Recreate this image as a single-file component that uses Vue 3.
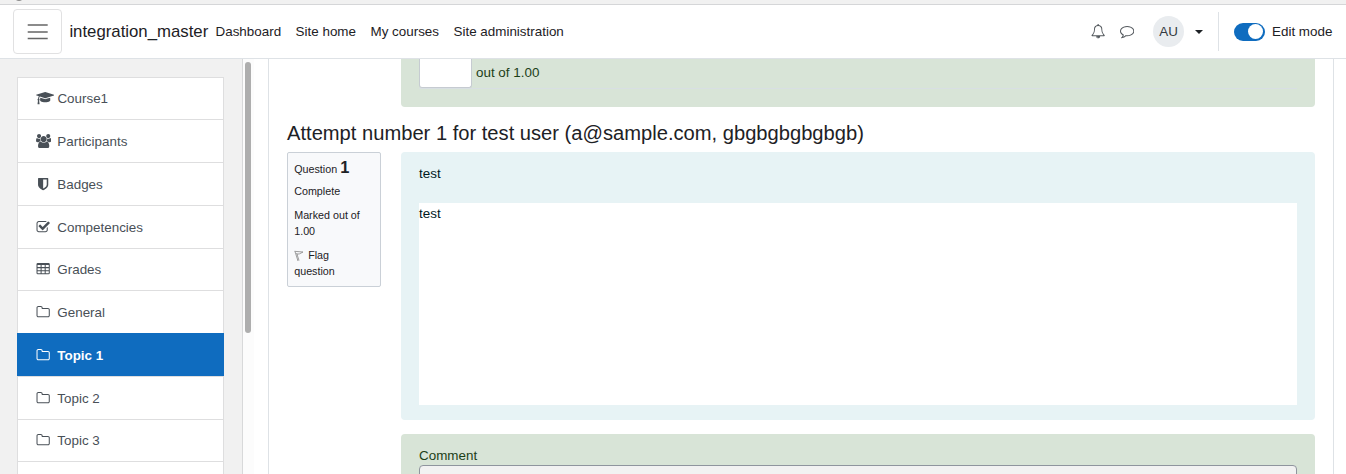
<template>
    <div class="page">
        <div class="browser-strip"><span class="tab-dot"></span></div>
        <header class="navbar">
            <button class="toggler" aria-label="Side panel">
                <svg viewBox="0 0 30 30"><path d="M4.7 8h20M4.7 15h20M4.7 21.5h20" /></svg>
            </button>
            <span class="brand">integration_master</span>
            <nav class="links">
                <a v-for="link in links" :key="link">{{ link }}</a>
            </nav>
            <svg class="fa bell" viewBox="0 0 1792 1792"><path :d="icons.bell" /></svg>
            <svg class="fa comment" viewBox="0 0 1792 1792"><path :d="icons.comment" /></svg>
            <span class="avatar">AU</span>
            <span class="caret"></span>
            <div class="edit">
                <span class="switch" :class="{ on: editMode }" @click="editMode = !editMode"></span>
                <span>Edit mode</span>
            </div>
        </header>
        <div class="body">
            <aside class="drawer">
                <ul class="menu">
                    <li v-for="item in items" :key="item.label" :class="{ active: item.label === current }" @click="current = item.label">
                        <svg class="fa" :class="item.icon" :viewBox="boxes[item.icon] || '0 0 1792 1792'">
                            <path fill-rule="evenodd" :d="icons[item.icon]" />
                        </svg>
                        <span>{{ item.label }}</span>
                    </li>
                    <li></li>
                </ul>
            </aside>
            <div class="scrollbar"><div class="thumb"></div></div>
            <main class="content">
                <section class="green marks">
                    <div class="mark-row">
                        <span class="mark-input"></span>
                        <span>out of 1.00</span>
                    </div>
                </section>
                <h4>Attempt number 1 for test user (a@sample.com, gbgbgbgbgbgb)</h4>
                <div class="question">
                    <div class="info">
                        <div class="number">Question <b>1</b></div>
                        <div class="state">Complete</div>
                        <div class="grade">Marked out of 1.00</div>
                        <div class="flag">
                            <svg viewBox="0 0 10 12">
                                <path d="M1 1.5l3 9.5M2.6 3L5 10.5M.5 1.3l8.5.7-3.4 1.8-2.6.4" />
                            </svg>
                            Flag question
                        </div>
                    </div>
                    <div class="formulation">
                        <p>test</p>
                        <div class="answer">test</div>
                    </div>
                </div>
                <section class="green feedback">
                    <label>Comment</label>
                    <div class="editor"></div>
                </section>
            </main>
        </div>
    </div>
</template>
<script setup>
import { ref } from 'vue'

const editMode = ref(true)
const current = ref('Topic 1')
const links = ['Dashboard', 'Site home', 'My courses', 'Site administration']

const items = [
    { label: 'Course1', icon: 'cap' },
    { label: 'Participants', icon: 'users' },
    { label: 'Badges', icon: 'shield' },
    { label: 'Competencies', icon: 'check' },
    { label: 'Grades', icon: 'table' },
    { label: 'General', icon: 'folder' },
    { label: 'Topic 1', icon: 'folder' },
    { label: 'Topic 2', icon: 'folder' },
    { label: 'Topic 3', icon: 'folder' },
]

// icons wider than the usual square
const boxes = { cap: '0 0 2304 1792', users: '-64 0 1920 1792' }

const icons = {
    cap: 'M1774 836l18 316q4 69-82 128t-235 93.5-323 34.5-323-34.5-235-93.5-82-128l18-316 574 181q22 7 48 7t48-7zm530-324q0 23-22 31l-1120 352q-4 1-10 1t-10-1l-652-206q-43 34-71 111.5t-34 178.5q63 36 63 109 0 69-58 107l58 433q2 14-8 25-9 11-24 11h-192q-15 0-24-11-10-11-8-25l58-433q-58-38-58-107 0-73 65-111 11-207 98-330l-333-104q-22-8-22-31t22-31l1120-352q4-1 10-1t10 1l1120 352q22 8 22 31z',
    users: 'M529 896q-162 5-265 128h-134q-82 0-138-40.5t-56-118.5q0-353 124-353 6 0 43.5 21t97.5 42.5 119 21.5q67 0 133-23-5 37-5 66 0 139 81 256zm1071 637q0 120-73 189.5t-194 69.5h-874q-121 0-194-69.5t-73-189.5q0-53 3.5-103.5t14-109 26.5-108.5 43-97.5 62-81 85.5-53.5 111.5-20q10 0 43 21.5t73 48 107 48 135 21.5 135-21.5 107-48 73-48 43-21.5q61 0 111.5 20t85.5 53.5 62 81 43 97.5 26.5 108.5 14 109 3.5 103.5zm-1024-1277q0 106-75 181t-181 75-181-75-75-181 75-181 181-75 181 75 75 181zm704 384q0 159-112.5 271.5t-271.5 112.5-271.5-112.5-112.5-271.5 112.5-271.5 271.5-112.5 271.5 112.5 112.5 271.5zm576 225q0 78-56 118.5t-138 40.5h-134q-103-123-265-128 81-117 81-256 0-29-5-66 66 23 133 23 59 0 119-21.5t97.5-42.5 43.5-21q124 0 124 353zm-128-609q0 106-75 181t-181 75-181-75-75-181 75-181 181-75 181 75 75 181z',
    shield: 'M1344 960v-640h-448v1137q119-63 213-137 235-184 235-360zm192-768v768q0 86-33.5 170.5t-83 150-118 127.5-126.5 103-121 77.5-89.5 49.5-42.5 20q-12 6-26 6t-26-6q-16-7-42.5-20t-89.5-49.5-121-77.5-126.5-103-118-127.5-83-150-33.5-170.5v-768q0-26 19-45t45-19h1152q26 0 45 19t19 45z',
    check: 'M1472 930v318q0 119-84.5 203.5t-203.5 84.5h-832q-119 0-203.5-84.5t-84.5-203.5v-832q0-119 84.5-203.5t203.5-84.5h832q63 0 117 25 15 7 18 23 3 17-9 29l-49 49q-10 10-23 10-3 0-9-2-23-6-45-6h-832q-66 0-113 47t-47 113v832q0 66 47 113t113 47h832q66 0 113-47t47-113v-254q0-13 9-22l64-64q10-10 23-10 6 0 12 3 20 8 20 29zm231-489l-814 814q-24 24-57 24t-57-24l-430-430q-24-24-24-57t24-57l110-110q24-24 57-24t57 24l263 263 647-647q24-24 57-24t57 24l110 110q24 24 24 57t-24 57z',
    table: 'M224 128h1344q160 0 160 160v1088q0 160-160 160h-1344q-160 0-160-160v-1088q0-160 160-160zM192 384v256h384v-256zM704 384v256h384v-256zM1216 384v256h384v-256zM192 768v256h384v-256zM704 768v256h384v-256zM1216 768v256h384v-256zM192 1152v256h384v-256zM704 1152v256h384v-256zM1216 1152v256h384v-256z',
    folder: 'M1600 1312v-704q0-40-28-68t-68-28h-704q-40 0-68-28t-28-68v-64q0-40-28-68t-68-28h-320q-40 0-68 28t-28 68v960q0 40 28 68t68 28h1216q40 0 68-28t28-68zm128-704v704q0 92-66 158t-158 66h-1216q-92 0-158-66t-66-158v-960q0-92 66-158t158-66h320q92 0 158 66t66 158v32h672q92 0 158 66t66 158z',
    bell: 'M912 1696q0-16-16-16-59 0-101.5-42.5t-42.5-101.5q0-16-16-16t-16 16q0 73 51.5 124.5t124.5 51.5q16 0 16-16zm-666-288h1300q-266-300-266-832 0-51-24-105t-69-103-121.5-80.5-169.5-31.5-169.5 31.5-121.5 80.5-69 103-24 105q0 532-266 832zm1482 0q0 52-38 90t-90 38h-448q0 106-75 181t-181 75-181-75-75-181h-448q-52 0-90-38t-38-90q50-42 91-88t85-119.5 74.5-158.5 50-206 19.5-260q0-152 117-282.5t307-158.5q-8-19-8-39 0-40 28-68t68-28 68 28 28 68q0 20-8 39 190 28 307 158.5t117 282.5q0 139 19.5 260t50 206 74.5 158.5 85 119.5 91 88z',
    comment: 'M896 384q-204 0-381.5 69.5t-282 187.5-104.5 255q0 112 71.5 213.5t201.5 175.5l87 50-27 96q-24 91-70 172 152-63 275-171l43-38 57 6q69 8 130 8 204 0 381.5-69.5t282-187.5 104.5-255-104.5-255-282-187.5-381.5-69.5zm896 512q0 174-120 321.5t-326 233-450 85.5q-70 0-145-8-198 175-460 242-49 14-114 22h-5q-15 0-27-10.5t-16-27.5v-1q-3-4-.5-12t2-10 4.5-9.5l6-9 7-8.5 8-9q7-8 31-34.5t34.5-38 31-39.5 32.5-51 27-59 26-76q-157-89-247.5-220t-90.5-281q0-174 120-321.5t326-233 450-85.5 450 85.5 326 233 120 321.5z',
}
</script>
<style>
body {
    overflow: hidden;
}
</style>
<style scoped>
* {
    box-sizing: border-box;
}

.page {
    display: flex;
    flex-direction: column;
    height: 474px;
    overflow: hidden;
    background: #fff;
    color: #1d2125;
    font-family: "Liberation Sans", Arial, sans-serif;
    font-size: 13.42px;
    line-height: 20px;
}

.browser-strip {
    flex: none;
    height: 5px;
    background: #f1f1f1;
    border-bottom: 1px solid #d5d6d8;
    overflow: hidden;
}

.tab-dot {
    display: block;
    width: 10px;
    height: 10px;
    margin: -9px 0 0 14px;
    border-radius: 50%;
    background: #8c8c8c;
}

.navbar {
    display: flex;
    flex: none;
    align-items: center;
    height: 54px;
    padding: 0 13.6px 0 13px;
    border-bottom: 1px solid #dee2e6;
}

.toggler {
    display: flex;
    align-items: center;
    justify-content: center;
    width: 49px;
    height: 45px;
    padding: 0;
    background: #fff;
    border: 1px solid #e1e1e2;
    border-radius: 4px;
}

.toggler svg {
    width: 30px;
    height: 30px;
    fill: none;
    stroke: #666;
    stroke-width: 1.7;
}

.brand {
    width: 147px;
    padding-left: 7.4px;
    font-size: 16.78px;
    white-space: nowrap;
}

.links {
    display: flex;
    flex: 1;
    gap: 14.5px;
    padding-left: 6.5px;
}

.fa {
    flex: none;
    height: 14.3px;
    fill: currentColor;
}

.bell,
.comment {
    width: 14.3px;
    color: #54595e;
}

.comment {
    margin: 0 19px 0 14px;
}

.avatar {
    width: 31px;
    height: 31px;
    border-radius: 50%;
    background: #e9ecef;
    color: #343a40;
    line-height: 31px;
    text-align: center;
}

.caret {
    margin: 0 15px 0 11px;
    border: 4px solid transparent;
    border-top-color: #1d2125;
    border-bottom: 0;
}

.edit {
    display: flex;
    align-items: center;
    gap: 7px;
    height: 39px;
    padding-left: 15px;
    border-left: 1px solid #dee2e6;
}

.switch {
    display: flex;
    align-items: center;
    width: 31px;
    height: 18px;
    padding: 0 2px;
    border-radius: 9px;
    background: #adb5bd;
}

.switch::before {
    content: "";
    width: 15px;
    height: 15px;
    border-radius: 50%;
    background: #fff;
}

.switch.on {
    justify-content: flex-end;
    background: #0f6cbf;
}

.body {
    display: flex;
    flex: 1;
    min-height: 0;
}

.drawer {
    width: 243px;
    padding: 18px 18px 0 17px;
    background: #f1f1f1;
    border-right: 1px solid #d8d9da;
    overflow: hidden;
}

.menu {
    display: grid;
    grid-template-rows: 42px 43px 43px 43px 42px 43px 43px 43px 42px 43px;
    margin: 0;
    padding: 0;
    list-style: none;
}

.menu li {
    display: flex;
    align-items: center;
    padding-left: 18px;
    background: #fff;
    border: 1px solid #dededf;
    border-bottom: 0;
    color: #495057;
}

.menu li span {
    margin-left: 7px;
    padding-top: 1px;
}

.menu .fa {
    width: 14.3px;
}

.menu .cap {
    width: 18.4px;
}

.menu .users {
    width: 15.3px;
}

.menu .cap + span {
    margin-left: 3px;
}

.menu .users + span {
    margin-left: 6px;
}

.menu li.active {
    background: #0f6cbf;
    border-color: #0f6cbf;
    color: #fff;
    font-weight: bold;
}

.scrollbar {
    width: 11px;
    padding: 3px 3px 0 2px;
    background: #fcfcfc;
}

.thumb {
    height: 271px;
    border-radius: 3px;
    background: #aeaeae;
}

.content {
    flex: 1;
    margin: 0 12px 0 14px;
    padding: 0 18px;
    border: solid #dee2e6;
    border-width: 0 1px;
    overflow: hidden;
}

.green {
    margin-left: 114px;
    padding: 0 18px;
    background: #d8e4d7;
    color: #1c4017;
}

.marks {
    height: 48px;
    border-radius: 0 0 4px 4px;
}

.mark-row {
    display: flex;
    gap: 4px;
    height: 30px;
    border-bottom: 1px solid #d8dfe3;
    line-height: 27px;
}

.mark-input {
    width: 53px;
    height: 29px;
    background: #fff;
    border: 1px solid #c6cbd1;
    border-top: 0;
    border-radius: 0 0 3px 3px;
}

h4 {
    margin: 14px 0 7px;
    font-size: 20.15px;
    font-weight: normal;
    line-height: 24px;
    white-space: nowrap;
}

.question {
    display: flex;
    align-items: flex-start;
    gap: 20px;
}

.info {
    width: 94px;
    height: 135px;
    padding: 6px 12px 6px 6.2px;
    background: #f8f9fb;
    border: 1px solid #cad0d7;
    border-radius: 2px;
    font-size: 10.74px;
    line-height: 16px;
}

.number {
    height: 17px;
    line-height: 16px;
}

.number b {
    font-size: 16.4px;
}

.state {
    margin-top: 7px;
}

.grade,
.flag {
    margin-top: 8px;
}

.flag svg {
    width: 10px;
    height: 12px;
    margin-right: 1px;
    vertical-align: -3px;
    fill: none;
    stroke: #858585;
    stroke-width: .8;
}

.formulation {
    flex: 1;
    height: 268px;
    padding: 12px 18px 0;
    background: #e7f3f5;
    border-radius: 4px;
    color: #001a1e;
}

.formulation p {
    margin: 0 0 19px;
}

.answer {
    height: 202px;
    padding-top: 1px;
    background: #fff;
}

.feedback {
    height: 60px;
    margin-top: 14px;
    padding-top: 12px;
    border-radius: 4px 4px 0 0;
}

.feedback label {
    display: block;
    height: 19px;
}

.editor {
    height: 40px;
    background: #f2f2f2;
    border: 1px solid #8f959e;
    border-radius: 4px;
}
</style>
